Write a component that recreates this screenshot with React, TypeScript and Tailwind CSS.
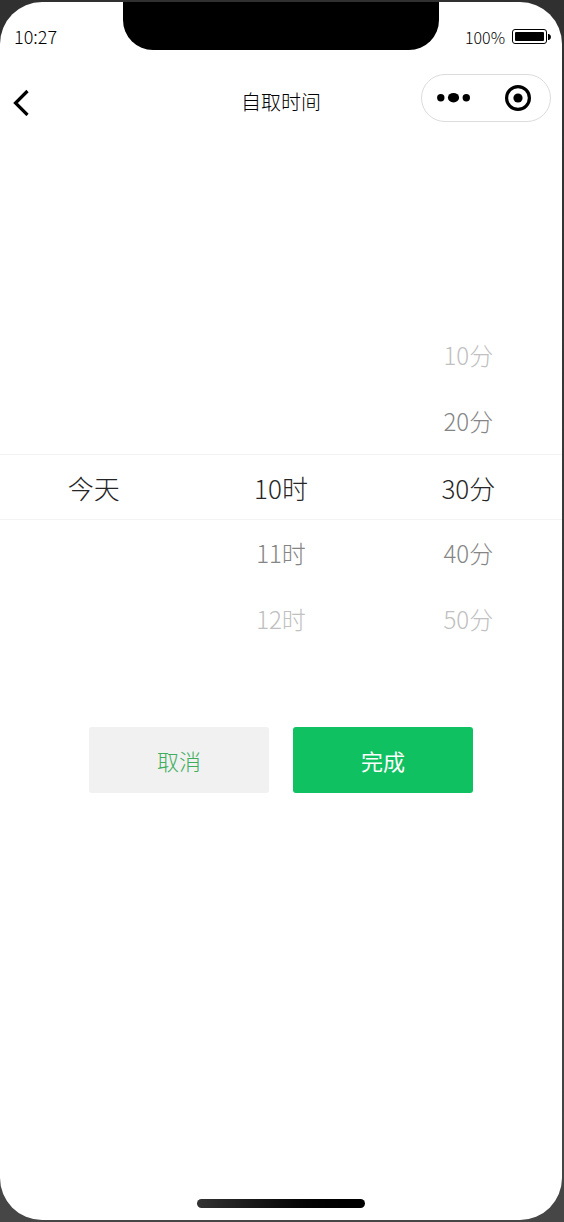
import { useState } from "react";

interface ColumnProps {
  label: string;
  options: string[];
  value: number;
  onChange: (index: number) => void;
}

const days = ["今天"];
const hours = ["10时", "11时", "12时"];
const minutes = ["00分", "10分", "20分", "30分", "40分", "50分"];

// Rows shown around the selected one, from top to bottom
const offsets = [-2, -1, 0, 1, 2];

function rowStyle(offset: number) {
  if (offset === 0) return "text-[26px] text-[#262626]";
  if (Math.abs(offset) === 1) return "text-2xl text-[#858585]";
  return "text-2xl text-[#c0c0c0]";
}

function PickerColumn({ label, options, value, onChange }: ColumnProps) {
  return (
    <ul role="listbox" aria-label={label} className="flex-1">
      {offsets.map((offset) => {
        const option = options[value + offset];
        return (
          <li
            key={offset}
            role="presentation"
            className={offset === 0 ? "h-[66px] border-y border-[#f3f3f3]" : "h-[66px]"}
          >
            {option && (
              <button
                type="button"
                role="option"
                aria-selected={offset === 0}
                onClick={() => onChange(value + offset)}
                className={`flex size-full items-center justify-center font-light ${rowStyle(offset)}`}
              >
                {option}
              </button>
            )}
          </li>
        );
      })}
    </ul>
  );
}

function StatusBar() {
  return (
    <div className="grid h-12 grid-cols-[1fr_316px_1fr] font-light text-black">
      <span className="pt-5 pl-3.5 text-lg leading-7">10:27</span>
      <div className="rounded-b-[30px] bg-black" />
      <div className="flex items-center justify-end gap-[7px] pt-5 pr-[11px]">
        <span className="pt-0.5 text-base leading-6">100%</span>
        <svg width="39" height="15" viewBox="0 0 39 15" aria-hidden="true">
          <rect x="0.5" y="0.5" width="34" height="14" rx="2.5" fill="none" stroke="black" />
          <rect x="3" y="3" width="29" height="9" rx="1" fill="black" />
          <path d="M36 5h1q2 1 2 3t-2 3h-1z" fill="black" />
        </svg>
      </div>
    </div>
  );
}

function NavBar() {
  return (
    <header className="grid grid-cols-3 items-end pt-6">
      <button type="button" aria-label="返回" className="flex h-10 items-center pl-3">
        <svg width="18" height="28" viewBox="0 0 18 28" fill="none" stroke="black" strokeWidth="3.2">
          <path d="M15.5 3 3.5 15l12 12" />
        </svg>
      </button>
      <h1 className="text-center text-xl leading-10 font-light text-black">自取时间</h1>
      <div className="mr-[11px] flex h-12 w-[130px] items-center justify-self-end rounded-full border border-[#dcdcdc]">
        <button type="button" aria-label="更多" className="flex h-full flex-1 items-center justify-center">
          <svg width="34" height="12" viewBox="0 0 34 12" fill="black">
            <circle cx="3.8" cy="5.7" r="3.7" />
            <ellipse cx="16.5" cy="5.7" rx="5.6" ry="4.8" />
            <circle cx="29.3" cy="5.7" r="3.7" />
          </svg>
        </button>
        <button type="button" aria-label="关闭" className="flex h-full flex-1 items-center justify-center">
          <svg width="26" height="26" viewBox="0 0 26 26">
            <circle cx="13" cy="13" r="11.4" fill="none" stroke="black" strokeWidth="3.2" />
            <circle cx="13" cy="13" r="4.6" fill="black" />
          </svg>
        </button>
      </div>
    </header>
  );
}

export default function App() {
  const [day, setDay] = useState(0);
  const [hour, setHour] = useState(0);
  const [minute, setMinute] = useState(3);

  return (
    <div className="flex min-h-screen flex-col bg-linear-to-b from-[#303030] to-[#464646] py-0.5 pr-0.5 font-['Noto_Sans_CJK_SC',sans-serif]">
      <div className="flex flex-1 flex-col rounded-[42px] bg-white">
        <StatusBar />
        <NavBar />

        <main className="flex-1 pt-[200px]">
          <div className="flex">
            <PickerColumn label="日期" options={days} value={day} onChange={setDay} />
            <PickerColumn label="小时" options={hours} value={hour} onChange={setHour} />
            <PickerColumn label="分钟" options={minutes} value={minute} onChange={setMinute} />
          </div>

          <div className="mt-[75px] flex justify-center gap-6 text-[22px]">
            <button type="button" className="h-[66px] w-[180px] rounded-[3px] bg-[#f1f1f1] font-light text-[#3fae5c]">
              取消
            </button>
            <button type="button" className="h-[66px] w-[180px] rounded-[3px] bg-[#0fc160] text-white">
              完成
            </button>
          </div>
        </main>

        <div className="mx-auto mb-3 h-[9px] w-[30%] rounded-full bg-linear-to-r from-[#333333] to-black" />
      </div>
    </div>
  );
}
